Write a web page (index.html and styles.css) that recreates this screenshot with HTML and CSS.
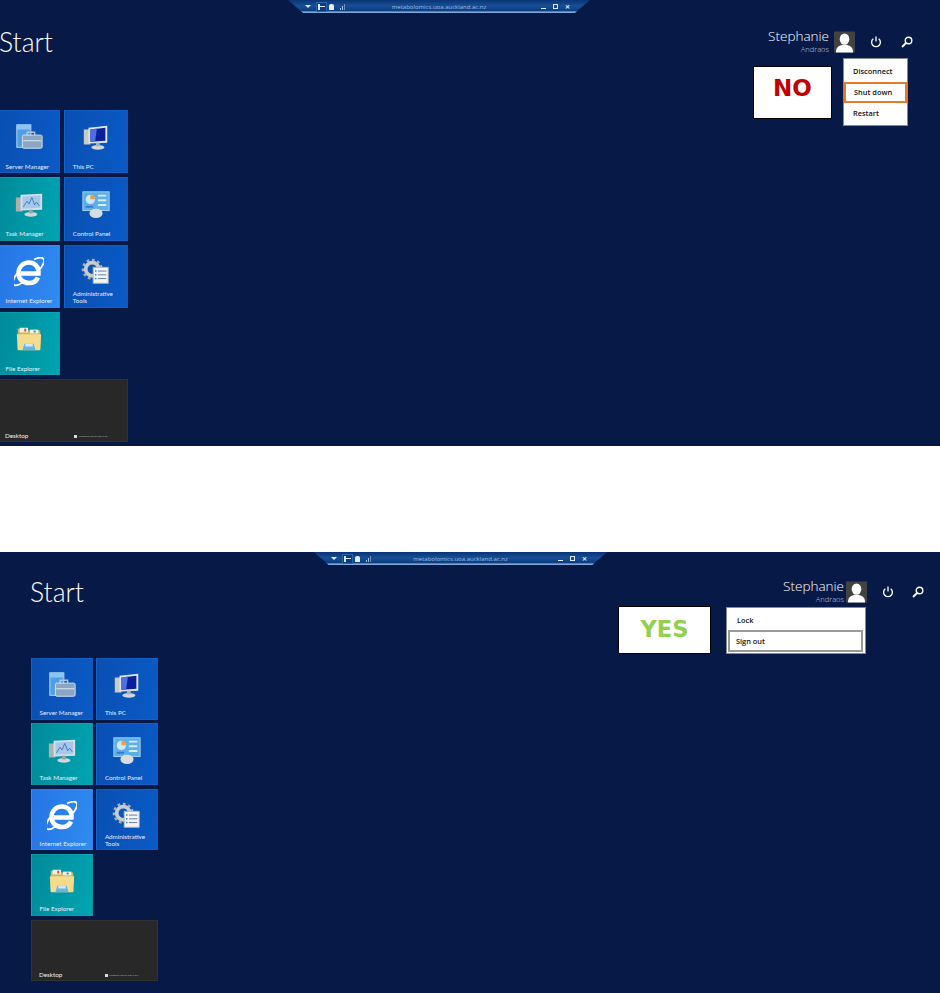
FILE: index.html
```html
<!DOCTYPE html>
<html lang="en">
<head>
  <meta charset="UTF-8">
  <title>Sign out of the remote desktop</title>
  <link rel="stylesheet" href="styles.css">
</head>
<body>
  <svg class="sprites" aria-hidden="true">
    <symbol id="i-server" viewBox="0 0 32 32">
      <rect x="3" y="3" width="15" height="24" fill="#4f9fe6" stroke="#bcdcf5"/>
      <rect x="3" y="3" width="15" height="5" fill="#8cc4ef"/>
      <path d="M14 14v-3h8v3" fill="none" stroke="#b8c4d0" stroke-width="1.5"/>
      <rect x="9" y="14" width="21" height="14" rx="1.5" fill="#8ba6c4" stroke="#d8e4ee"/>
      <path d="M10 20h19" stroke="#e4edf4"/>
    </symbol>
    <symbol id="i-pc" viewBox="0 0 32 32">
      <rect x="3" y="8" width="7" height="16" fill="#c4cdc8"/>
      <path d="M8 6l20-2v18l-20 1z" fill="#dfe5ea"/>
      <path d="M10 8l16-2v14l-16 1z" fill="#0a1f9c"/>
      <path d="M10 8l7-1-2 14-5 0z" fill="#4f6ee0"/>
      <ellipse cx="18" cy="27" rx="7" ry="2.5" fill="#d0d6da"/>
      <rect x="16" y="22" width="4" height="4" fill="#aab2b8"/>
    </symbol>
    <symbol id="i-task" viewBox="0 0 32 32">
      <rect x="2" y="9" width="7" height="15" fill="#a9b2ae"/>
      <path d="M7 6l23-1v17l-23 1z" fill="#d5dfe6"/>
      <path d="M9 8l19-1v13l-19 1z" fill="#a8c8ea"/>
      <path d="M10 19l4-6 2 3 3-7 3 8 2-3 3 4" fill="none" stroke="#3f77c4"/>
      <ellipse cx="18" cy="27" rx="7" ry="2.5" fill="#d0d6da"/>
      <rect x="16" y="22" width="4" height="4" fill="#98a2a8"/>
    </symbol>
    <symbol id="i-panel" viewBox="0 0 32 32">
      <rect x="2" y="3" width="28" height="20" fill="#5eaee8" stroke="#a8d4f4"/>
      <circle cx="10" cy="11" r="5" fill="#cfe6f8"/>
      <path d="M10 11V6a5 5 0 0 1 5 5z" fill="#f0a030"/>
      <path d="M18 7h9M18 12h9M18 17h9" stroke="#d6ecfa" stroke-width="2"/>
      <rect x="5" y="18" width="8" height="2" fill="#2f7fca"/>
      <ellipse cx="16" cy="26" rx="7" ry="5" fill="#d8dde0"/>
    </symbol>
    <symbol id="i-ie" viewBox="1 1 30 30">
      <path d="M8 17.5h17.5C26 10 21 6.5 16 6.5 10 6.5 5.5 11 5.500 17c0 6 4.500 10 10.500 10 4.500 0 7.500-2 9-5.500" fill="none" stroke="#fff" stroke-width="4.500"/>
      <path d="M21 3.500c5-2.500 9.500-2.500 10 .5.500 3-2 6.500-4 9M10 26c-4 3-8 4-9.500 2.500-1.500-2 .5-7 3.500-11" fill="none" stroke="#fff" stroke-width="1.800"/>
    </symbol>
    <symbol id="i-admin" viewBox="0 0 32 32">
      <circle cx="12" cy="13" r="7" fill="none" stroke="#c6ccd0" stroke-width="4"/>
      <circle cx="12" cy="13" r="10" fill="none" stroke="#aab2b8" stroke-width="2.500" stroke-dasharray="3 2.800"/>
      <rect x="13" y="11" width="16" height="17" fill="#f2f4f6" stroke="#aeb8c0"/>
      <path d="M18 15h9M18 19h9M18 23h9" stroke="#5c7a9a"/>
      <path d="M15 15h1.500M15 19h1.500M15 23h1.500" stroke="#2f7fca" stroke-width="1.500"/>
    </symbol>
    <symbol id="i-folder" viewBox="0 0 32 32">
      <path d="M4 5h9l2 2h13v20H4z" fill="#cdb564"/>
      <rect x="6" y="4" width="9" height="5" fill="#eef0e4"/>
      <rect x="17" y="6" width="9" height="4" fill="#eef0e4"/>
      <rect x="11" y="5" width="2" height="3" fill="#c9503a"/>
      <rect x="21" y="7" width="2" height="2" fill="#2f7fca"/>
      <path d="M3 11h26l-1 17H4z" fill="#f4dc8c"/>
      <path d="M9 28l2-7h10l2 7z" fill="#68b4dc"/>
      <rect x="12" y="21" width="8" height="3" fill="#d4e8f2"/>
    </symbol>
    <symbol id="i-power" viewBox="0 0 12 12">
      <path d="M3.300 2.800a4.400 4.400 0 1 0 5.400 0" fill="none" stroke="#fff" stroke-width="1.300"/>
      <path d="M6 .5v5" stroke="#fff" stroke-width="1.300"/>
    </symbol>
    <symbol id="i-search" viewBox="0 0 12 12">
      <circle cx="7.500" cy="4.500" r="3.300" fill="none" stroke="#fff" stroke-width="1.400"/>
      <path d="M5 7l-4 4" stroke="#fff" stroke-width="1.800"/>
    </symbol>
    <symbol id="i-avatar" viewBox="0 0 22 22">
      <rect width="22" height="22" fill="#424242"/>
      <ellipse cx="11" cy="8" rx="5" ry="6" fill="#fff"/>
      <path d="M2 22c0-6 4-8 9-8s9 2 9 8z" fill="#fff"/>
    </symbol>
  </svg>

  <section class="screen screen-no">
    <div class="rdp-bar">
      <div class="rdp-left">
        <span class="rdp-arrow"></span>
        <span class="rdp-pin"></span>
        <span class="rdp-lock"></span>
        <span class="rdp-signal"><i></i><i></i><i></i></span>
      </div>
      <div class="rdp-host">metabolomics.uoa.auckland.ac.nz</div>
      <div class="rdp-right">
        <span class="rdp-min"></span>
        <span class="rdp-restore"></span>
        <span class="rdp-close">✕</span>
      </div>
    </div>

    <header class="head">
      <h1>Start</h1>
      <div class="account">
        <div class="user">
          <div class="user-name">Stephanie<small>Andraos</small></div>
          <svg class="avatar"><use href="#i-avatar"/></svg>
          <svg class="glyph power"><use href="#i-power"/></svg>
          <svg class="glyph search"><use href="#i-search"/></svg>
        </div>
        <div class="popups">
          <div class="verdict verdict-no">NO</div>
          <ul class="menu">
            <li>Disconnect</li>
            <li class="picked-orange">Shut down</li>
            <li>Restart</li>
          </ul>
        </div>
      </div>
    </header>

    <div class="tiles">
      <div class="tile blue"><svg class="tile-icon"><use href="#i-server"/></svg><span>Server Manager</span></div>
      <div class="tile blue"><svg class="tile-icon"><use href="#i-pc"/></svg><span>This PC</span></div>
      <div class="tile teal"><svg class="tile-icon"><use href="#i-task"/></svg><span>Task Manager</span></div>
      <div class="tile blue"><svg class="tile-icon"><use href="#i-panel"/></svg><span>Control Panel</span></div>
      <div class="tile sky"><svg class="tile-icon"><use href="#i-ie"/></svg><span>Internet Explorer</span></div>
      <div class="tile blue"><svg class="tile-icon"><use href="#i-admin"/></svg><span>Administrative<br>Tools</span></div>
      <div class="tile teal"><svg class="tile-icon"><use href="#i-folder"/></svg><span>File Explorer</span></div>
      <div class="tile desktop"><span>Desktop</span><em><b></b>Windows Server 2012 R2</em></div>
    </div>
  </section>

  <div class="gap"></div>

  <section class="screen screen-yes">
    <div class="rdp-bar">
      <div class="rdp-left">
        <span class="rdp-arrow"></span>
        <span class="rdp-pin"></span>
        <span class="rdp-lock"></span>
        <span class="rdp-signal"><i></i><i></i><i></i></span>
      </div>
      <div class="rdp-host">metabolomics.uoa.auckland.ac.nz</div>
      <div class="rdp-right">
        <span class="rdp-min"></span>
        <span class="rdp-restore"></span>
        <span class="rdp-close">✕</span>
      </div>
    </div>

    <header class="head">
      <h1>Start</h1>
      <div class="account">
        <div class="user">
          <div class="user-name">Stephanie<small>Andraos</small></div>
          <svg class="avatar"><use href="#i-avatar"/></svg>
          <svg class="glyph power"><use href="#i-power"/></svg>
          <svg class="glyph search"><use href="#i-search"/></svg>
        </div>
        <div class="popups">
          <div class="verdict verdict-yes">YES</div>
          <ul class="menu">
            <li>Lock</li>
            <li class="picked-grey">Sign out</li>
          </ul>
        </div>
      </div>
    </header>

    <div class="tiles">
      <div class="tile blue"><svg class="tile-icon"><use href="#i-server"/></svg><span>Server Manager</span></div>
      <div class="tile blue"><svg class="tile-icon"><use href="#i-pc"/></svg><span>This PC</span></div>
      <div class="tile teal"><svg class="tile-icon"><use href="#i-task"/></svg><span>Task Manager</span></div>
      <div class="tile blue"><svg class="tile-icon"><use href="#i-panel"/></svg><span>Control Panel</span></div>
      <div class="tile sky"><svg class="tile-icon"><use href="#i-ie"/></svg><span>Internet Explorer</span></div>
      <div class="tile blue"><svg class="tile-icon"><use href="#i-admin"/></svg><span>Administrative<br>Tools</span></div>
      <div class="tile teal"><svg class="tile-icon"><use href="#i-folder"/></svg><span>File Explorer</span></div>
      <div class="tile desktop"><span>Desktop</span><em><b></b>Windows Server 2012 R2</em></div>
    </div>
  </section>
</body>
</html>
```

FILE: styles.css
```css
* {
  box-sizing: border-box;
}
body {
  margin: 0;
  background: #fff;
  font-family: "Open Sans", "Liberation Sans", sans-serif;
  overflow: hidden;
}
.sprites {
  display: none;
}
.gap {
  height: 106px;
}

.screen {
  position: relative;
  overflow: hidden;
  background: #071a47;
  color: #fff;
}
.screen-no {
  height: 446px;
  --tile: 63.3px;
  --tile-gap: 4px;
  --bar-left: 288px;
  --tiles-left: -3px;
  --tiles-top: 110px;
}
.screen-yes {
  height: 441px;
  --tile: 61.5px;
  --tile-gap: 3.9px;
  --bar-left: 314px;
  --tiles-left: 31px;
  --tiles-top: 106px;
}

/* remote desktop connection bar */
.rdp-bar {
  position: absolute;
  top: 0;
  left: var(--bar-left);
  width: 302px;
  height: 13px;
  display: grid;
  grid-template-columns: 1fr auto 1fr;
  align-items: center;
  padding: 0 17px;
  background: linear-gradient(#0a3474, #174f98 45%, #0c3d80 82%, #7fa8d6 92%, #7fa8d6);
  clip-path: polygon(0 0, 100% 0, 95% 100%, 5% 100%);
}
.screen-yes .rdp-bar {
  width: 293px;
}
.rdp-left, .rdp-right {
  display: flex;
  align-items: center;
}
.rdp-right {
  justify-content: flex-end;
  gap: 7px;
  padding-right: 3px;
}
.rdp-host {
  font-size: 6px;
  color: #9dbde2;
  white-space: nowrap;
}
.rdp-arrow {
  width: 0;
  height: 0;
  border: 3px solid transparent;
  border-top: 3px solid #dfe9f5;
  border-bottom: 0;
  margin-right: 6px;
}
.rdp-pin {
  width: 9px;
  height: 8px;
  margin-right: 3px;
  background: linear-gradient(#dfe9f5, #dfe9f5) center / 7px 1px no-repeat, linear-gradient(#dfe9f5, #dfe9f5) 1px center / 2px 6px no-repeat, #0c3a7c;
  outline: 1px solid #2a66ae;
}
.rdp-lock {
  width: 5px;
  height: 6px;
  margin-top: 1px;
  margin-right: 6px;
  background: #e4edf6;
  border-radius: 2px 2px 0 0;
}
.rdp-signal {
  display: flex;
  align-items: flex-end;
  gap: 1px;
  height: 6px;
}
.rdp-signal i {
  width: 1px;
  height: 2px;
  background: #a9c3e0;
}
.rdp-signal i:nth-child(2) {
  height: 4px;
}
.rdp-signal i:nth-child(3) {
  height: 6px;
  background: #6d91bd;
}
.rdp-min {
  width: 5px;
  height: 1px;
  margin-top: 4px;
  background: #dfe9f5;
}
.rdp-restore {
  width: 5px;
  height: 5px;
  border: 1px solid #dfe9f5;
}
.rdp-close {
  font-size: 6px;
  line-height: 1;
  font-weight: 700;
  color: #e8eff7;
}

/* Start heading, user and popups */
.head {
  display: flex;
  justify-content: space-between;
  align-items: flex-start;
  height: var(--tiles-top);
}
.screen-no .head {
  padding: 24px 0 0 0;
}
.screen-yes .head {
  padding: 22px 0 0 30px;
}
.screen-yes .account {
  margin-top: 1px;
}
h1 {
  margin: 0;
  font-family: Lato, "Open Sans", sans-serif;
  font-size: 26.500px;
  line-height: 36px;
  font-weight: 300;
}
.screen-no h1 {
  margin-left: -1px;
}
.account {
  display: flex;
  flex-direction: column;
  align-items: flex-end;
}
.user {
  display: flex;
  align-items: flex-start;
}
.screen-no .user {
  padding: 5px 27px 0 0;
}
.screen-yes .user {
  padding: 4px 16px 0 0;
}
.user-name {
  font-size: 13.500px;
  font-weight: 300;
  line-height: 15px;
  text-align: right;
  margin-right: 5px;
}
.screen-yes .user-name {
  margin-right: 2px;
}
.user-name small {
  display: block;
  margin-top: 1px;
  font-size: 7.500px;
  line-height: 9px;
  color: #c8d2e4;
}
.avatar {
  width: 21px;
  height: 22px;
  margin-top: 2px;
}
.glyph {
  width: 12px;
  height: 12px;
  margin-top: 7px;
}
.power {
  margin-left: 15px;
}
.search {
  margin-left: 19px;
}
.screen-yes .search {
  margin-left: 18px;
}
.popups {
  display: flex;
  align-items: flex-start;
}
.screen-no .popups {
  gap: 11px;
  margin: 4px 32px 0 0;
}
.screen-yes .popups {
  gap: 15px;
  margin: 3px 74px 0 0;
}
.verdict {
  background: #fff;
  border: 1px solid #000;
  font-family: "DejaVu Sans", sans-serif;
  font-weight: 700;
  text-align: center;
}
.verdict-no {
  width: 79px;
  height: 53px;
  margin-top: 8px;
  padding-top: 6px;
  font-size: 23px;
  line-height: 30px;
  color: #c00000;
}
.verdict-yes {
  width: 93px;
  height: 48px;
  margin-top: -1px;
  font-size: 22.500px;
  line-height: 44px;
  color: #92d050;
}
.menu {
  list-style: none;
  margin: 0;
  background: #fff;
  border: 1px solid #8a8a8a;
  color: #111;
  font-size: 7.400px;
  font-weight: 600;
}
.screen-no .menu {
  width: 65px;
  height: 68px;
  padding: 2px 0 0;
}
.screen-yes .menu {
  width: 140px;
  height: 47px;
  padding: 2px 2px 0 1px;
}
.menu li {
  height: 21px;
  line-height: 21px;
  padding-left: 9px;
}
.screen-yes .menu li {
  height: 20px;
  line-height: 20px;
}
.menu .picked-orange {
  border: 2px solid #e8792b;
  line-height: 17px;
  padding-left: 8px;
}
.screen-yes .menu .picked-grey {
  height: 22px;
  border: 2px solid #9a9a9a;
  line-height: 18px;
  padding-left: 6px;
}

/* tiles */
.tiles {
  display: grid;
  grid-template-columns: var(--tile) var(--tile);
  grid-auto-rows: var(--tile);
  gap: var(--tile-gap);
  margin-left: var(--tiles-left);
}
.tile {
  display: flex;
  flex-direction: column;
  align-items: center;
  padding-top: 11px;
  font-family: Lato, "Open Sans", sans-serif;
  font-size: 6.300px;
  line-height: 7px;
  color: #e8eef8;
  border: 1px solid rgba(255, 255, 255, 0.05);
}
.tile span {
  align-self: stretch;
  margin-top: auto;
  padding: 0 0 2.500px 7.500px;
  white-space: nowrap;
}
.tile-icon {
  width: 30px;
  height: 30px;
}
.blue {
  background: linear-gradient(100deg, #0a4fb2, #0a5ac6);
}
.teal {
  background: linear-gradient(100deg, #008a99, #00a4b2);
}
.sky {
  background: linear-gradient(100deg, #2674e6, #2f8cf0);
}
.desktop {
  grid-column: span 2;
  flex-direction: row;
  align-items: flex-end;
  justify-content: space-between;
  padding: 0 0 2px;
  background: #282828;
}
.desktop span {
  align-self: flex-end;
  margin: 0;
  padding: 0 0 0 7px;
}
.desktop em {
  display: flex;
  align-items: center;
  gap: 1px;
  margin: 0 19px 1px 0;
  font-size: 2.600px;
  line-height: 4px;
  font-style: normal;
  color: #b4b4b4;
  white-space: nowrap;
}
.desktop b {
  width: 3px;
  height: 3px;
  background: #dcdcdc;
}
```
